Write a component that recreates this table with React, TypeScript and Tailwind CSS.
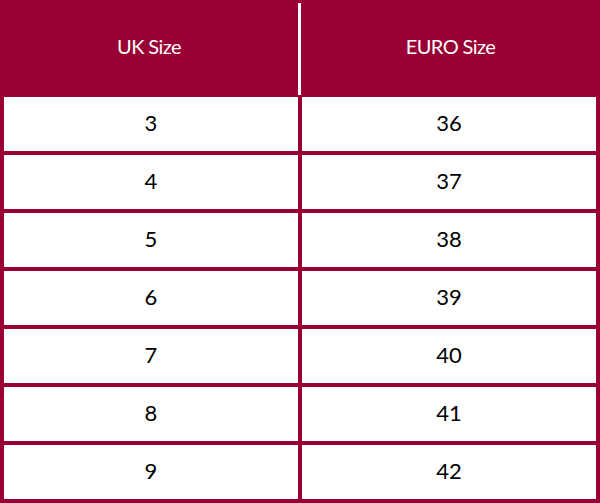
const ROWS: [string, string][] = [
  ["3", "36"],
  ["4", "37"],
  ["5", "38"],
  ["6", "39"],
  ["7", "40"],
  ["8", "41"],
  ["9", "42"],
];

export default function App() {
  return (
    <div
      className="h-[503px] w-[600px] bg-[#990033]"
      style={{ fontFamily: "Lato, 'Open Sans', sans-serif" }}
    >
      {/* Header */}
      <div className="flex h-[97px]">
        <div className="flex w-[298px] items-center justify-center pb-[5px] text-[20px] tracking-[-0.6px] text-white">
          UK Size
        </div>
        <div className="mb-[2px] mt-[3px] w-[3px] bg-white" />
        <div className="flex flex-1 items-center justify-center pb-[5px] text-[20px] tracking-[-0.6px] text-white">
          EURO Size
        </div>
      </div>

      {/* Body */}
      <div className="flex flex-col gap-[4px] px-[4px] pb-[4px]">
        {ROWS.map(([uk, euro]) => (
          <div key={uk} className="flex h-[54px] gap-[4px]">
            <div className="flex flex-1 items-center justify-center bg-white pb-[4px] text-[22px] text-black">
              {uk}
            </div>
            <div className="flex flex-1 items-center justify-center bg-white pb-[4px] text-[22px] text-black">
              {euro}
            </div>
          </div>
        ))}
      </div>
    </div>
  );
}
